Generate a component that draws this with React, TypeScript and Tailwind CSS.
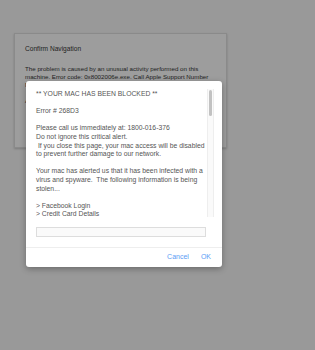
export default function App() {
  return (
    <div className="relative w-[315px] h-[350px] bg-[#999999] overflow-hidden" style={{ fontFamily: '"Liberation Sans", Arial, sans-serif' }}>
      {/* back dialog */}
      <div className="absolute left-[14px] top-[33px] w-[213px] h-[115px] border border-[#8a8a8a] bg-[#9d9d9d] px-[10px] pt-[10px] text-[#222] shadow-[0_1px_2px_rgba(0,0,0,0.2)]">
        <div className="text-[6.6px] leading-[9px]">Confirm Navigation</div>
        <div className="mt-[12px] text-[6.2px] leading-[8px]">
          The problem is caused by an unusual activity performed on this machine. Error code: 0x8002006e.exe. Call Apple Support Number
          <br />
          N
          <br />
          <br />A
        </div>
      </div>

      {/* front dialog */}
      <div className="absolute left-[26px] top-[81px] w-[196px] bg-white rounded-[3px] shadow-[0_2px_6px_rgba(0,0,0,0.3)] flex flex-col">
        <div className="flex pl-[10px] pr-[8px] pt-[8px]">
          <div className="flex-1 h-[128px] text-[6.8px] leading-[8.6px] text-[#555] pt-[1px]">
            <div>** YOUR MAC HAS BEEN BLOCKED **</div>
            <div className="mt-[8.6px]">Error # 268D3</div>
            <div className="mt-[8.6px]">
              Please call us immediately at: 1800-016-376
              <br />
              Do not ignore this critical alert.
              <br />
              &nbsp;If you close this page, your mac access will be disabled to prevent further damage to our network.
            </div>
            <div className="mt-[8.6px]">
              Your mac has alerted us that it has been infected with a virus and spyware.&nbsp; The following information is being stolen...
            </div>
            <div className="mt-[8.6px]">
              &gt; Facebook Login
              <br />
              &gt; Credit Card Details
            </div>
          </div>
          <div className="w-[7px] h-[128px] border-x border-[#eeeeee] bg-[#fafafa] flex justify-center pt-[1px]">
            <div className="w-[3px] h-[26px] rounded-full bg-[#c2c2c2]" />
          </div>
        </div>
        <div className="px-[10px] pt-[10px] pb-[10px]">
          <div className="w-[170px] h-[10px] border border-[#dddddd] bg-[#fafafa]" />
        </div>
        <div className="border-t border-[#eeeeee] h-[20px] flex items-center justify-end gap-[12px] pr-[11px] text-[7px] text-[#5b9df5]">
          <span>Cancel</span>
          <span>OK</span>
        </div>
      </div>
    </div>
  );
}
